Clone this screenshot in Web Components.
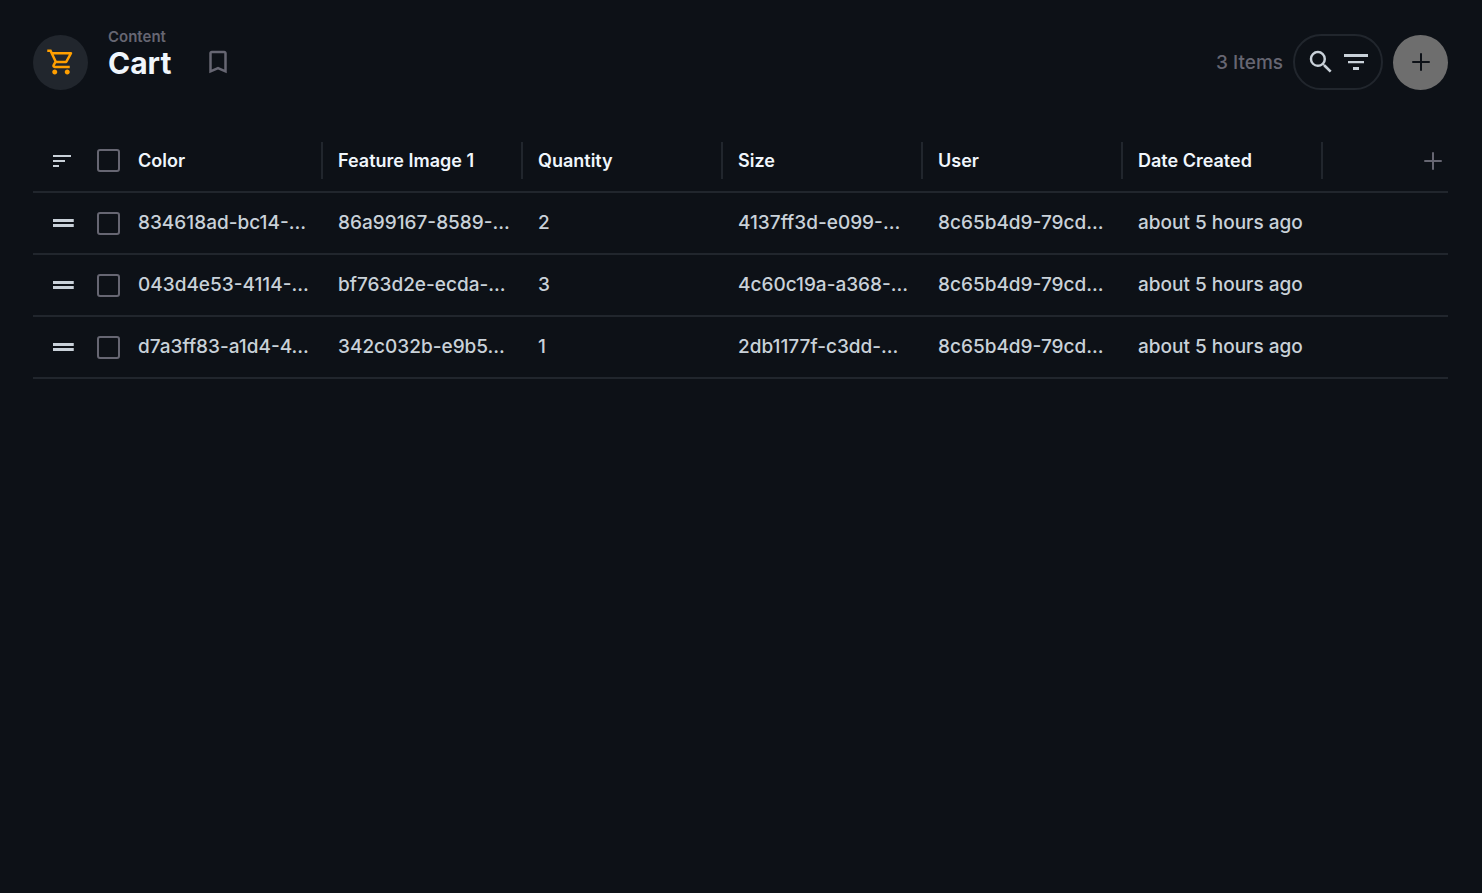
<!DOCTYPE html>
<html lang="en">
<head>
    <meta charset="UTF-8">
    <meta name="viewport" content="width=device-width, initial-scale=1.0">
    <title>Cart</title>
    <style>
        :root {
            --background: #0d1117;
            --border: #21262d;
            --foreground: #c9d1d9;
            --foreground-accent: #f0f6fc;
            --foreground-subdued: #666672;
            --warning: #ff9f00;
        }
        body {
            margin: 0;
            background-color: var(--background);
            color: var(--foreground);
            font-family: Inter, "Liberation Sans", sans-serif;
            font-size: 19px;
            font-weight: 500;
        }
        main {
            padding: 28px 34px 33px 33px;
        }
    </style>
</head>
<body>
    <main>
        <content-header icon="cart">
            <span slot="headline">Content</span>
            <span slot="title">Cart</span>
            <span slot="count">3 Items</span>
        </content-header>
        <items-table></items-table>
    </main>

    <script>
        const icons = {
            cart: "M15.55 13c.75 0 1.41-.41 1.75-1.03l3.58-6.49c.37-.66-.11-1.48-.87-1.48H5.21l-.94-2H1v2h2l3.6 7.59-1.35 2.44C4.52 15.37 5.48 17 7 17h12v-2H7l1.1-2h7.45zM6.16 6h12.15l-2.76 5H8.53L6.16 6zM7 18c-1.1 0-1.99.9-1.99 2S5.9 22 7 22s2-.9 2-2-.9-2-2-2zm10 0c-1.1 0-1.99.9-1.99 2s.89 2 1.99 2 2-.9 2-2-.9-2-2-2z",
            bookmark: "M17 3H7c-1.1 0-2 .9-2 2v16l7-3 7 3V5c0-1.1-.9-2-2-2zm0 15l-5-2.18L7 18V5h10v13z",
            search: "M15.5 14h-.79l-.28-.27A6.47 6.47 0 0 0 16 9.5 6.5 6.5 0 1 0 9.5 16c1.61 0 3.09-.59 4.23-1.57l.27.28v.79l5 4.99L20.49 19l-4.99-5zm-6 0C7.01 14 5 11.99 5 9.5S7.01 5 9.5 5 14 7.01 14 9.5 11.99 14 9.5 14z",
            filter: "M2.4 5.6h19.2V8H2.4zM5.6 11.2h12.8v1.8H5.6zM9.6 16h4.8v2.4H9.6z",
            add: "M19 12.8h-6.2V19h-1.6v-6.2H5v-1.6h6.2V5h1.6v6.2H19v1.6z",
            sort: "M3 18h6v-2H3v2zM3 6v2h18V6H3zm0 7h12v-2H3v2z",
            drag: "M4 8.8h16.6v2.4H4zM4 12.8h16.6v2.4H4z"
        };

        class AppIcon extends HTMLElement {
            constructor() {
                super();
                this.shadowDOM = this.attachShadow({ mode: "open" });
            }

            connectedCallback() {
                this.shadowDOM.innerHTML = `
                    <style>
                        :host {
                            display: block;
                            width: 30px;
                            height: 30px;
                        }
                        svg {
                            display: block;
                            width: 100%;
                            height: 100%;
                            fill: currentColor;
                        }
                    </style>
                    <svg viewBox="0 0 24 24" aria-hidden="true">
                        <path d="${icons[this.getAttribute("name")]}"/>
                    </svg>
                `;
            }
        }

        customElements.define("app-icon", AppIcon);

        class SearchBar extends HTMLElement {
            constructor() {
                super();
                this.shadowDOM = this.attachShadow({ mode: "open" });
            }

            connectedCallback() {
                this.shadowDOM.innerHTML = `
                    <style>
                        :host {
                            display: flex;
                            align-items: center;
                            gap: 5px;
                            box-sizing: border-box;
                            height: 56px;
                            padding: 0 10px 0 11px;
                            border: 2px solid var(--border);
                            border-radius: 28px;
                        }
                        button {
                            padding: 0;
                            border: none;
                            background: none;
                            color: inherit;
                            cursor: pointer;
                        }
                    </style>
                    <button aria-label="Search"><app-icon name="search"></app-icon></button>
                    <button aria-label="Filter"><app-icon name="filter"></app-icon></button>
                `;
            }
        }

        customElements.define("search-bar", SearchBar);

        class ContentHeader extends HTMLElement {
            constructor() {
                super();
                this.shadowDOM = this.attachShadow({ mode: "open" });
            }

            connectedCallback() {
                this.shadowDOM.innerHTML = `
                    <style>
                        :host {
                            display: flex;
                            align-items: center;
                            min-height: 68px;
                            margin-bottom: 34px;
                        }
                        .badge,
                        .add {
                            display: flex;
                            align-items: center;
                            justify-content: center;
                            width: 55px;
                            height: 55px;
                            border-radius: 50%;
                        }
                        .badge {
                            background-color: var(--border);
                            color: var(--warning);
                        }
                        .titles {
                            align-self: flex-start;
                            margin: 0 32px 0 20px;
                        }
                        .headline {
                            font-size: 15px;
                            font-weight: 600;
                            line-height: 17px;
                            color: var(--foreground-subdued);
                        }
                        h1 {
                            margin: 0;
                            font-size: 30px;
                            font-weight: 700;
                            line-height: 36px;
                            color: var(--foreground-accent);
                        }
                        button {
                            padding: 0;
                            border: none;
                            background: none;
                            cursor: pointer;
                        }
                        .bookmark {
                            color: var(--foreground-subdued);
                        }
                        .actions {
                            display: flex;
                            align-items: center;
                            gap: 10px;
                            margin-left: auto;
                        }
                        .count {
                            color: var(--foreground-subdued);
                        }
                        .add {
                            background-color: #6e6e6e;
                            color: var(--background);
                        }
                    </style>
                    <div class="badge"><app-icon name="${this.getAttribute("icon")}"></app-icon></div>
                    <div class="titles">
                        <div class="headline"><slot name="headline"></slot></div>
                        <h1><slot name="title"></slot></h1>
                    </div>
                    <button class="bookmark" aria-label="Bookmark"><app-icon name="bookmark"></app-icon></button>
                    <div class="actions">
                        <div class="count"><slot name="count"></slot></div>
                        <search-bar></search-bar>
                        <button class="add" aria-label="Create item"><app-icon name="add"></app-icon></button>
                    </div>
                `;
            }
        }

        customElements.define("content-header", ContentHeader);

        class CheckBox extends HTMLElement {
            constructor() {
                super();
                this.shadowDOM = this.attachShadow({ mode: "open" });
            }

            connectedCallback() {
                this.shadowDOM.innerHTML = `
                    <style>
                        :host {
                            display: block;
                        }
                        input {
                            appearance: none;
                            display: block;
                            box-sizing: border-box;
                            width: 23px;
                            height: 23px;
                            margin: 0;
                            border: 2px solid var(--foreground-subdued);
                            border-radius: 3px;
                            cursor: pointer;
                        }
                        input:checked {
                            background-color: var(--foreground-subdued);
                        }
                    </style>
                    <input type="checkbox" aria-label="${this.getAttribute("label")}">
                `;
            }
        }

        customElements.define("check-box", CheckBox);

        const columns = ["Color", "Feature Image 1", "Quantity", "Size", "User", "Date Created"];
        const items = [
            ["834618ad-bc14-…", "86a99167-8589-…", "2", "4137ff3d-e099-…", "8c65b4d9-79cd…", "about 5 hours ago"],
            ["043d4e53-4114-…", "bf763d2e-ecda-…", "3", "4c60c19a-a368-…", "8c65b4d9-79cd…", "about 5 hours ago"],
            ["d7a3ff83-a1d4-4…", "342c032b-e9b5…", "1", "2db1177f-c3dd-…", "8c65b4d9-79cd…", "about 5 hours ago"]
        ];

        class ItemsTable extends HTMLElement {
            constructor() {
                super();
                this.shadowDOM = this.attachShadow({ mode: "open" });
            }

            connectedCallback() {
                this.render();
            }

            render() {
                this.shadowDOM.innerHTML = `
                    <style>
                        :host {
                            display: block;
                        }
                        table {
                            width: 100%;
                            table-layout: fixed;
                            border-spacing: 0;
                        }
                        .col-drag {
                            width: 57px;
                        }
                        .col-select {
                            width: 33px;
                        }
                        .col-field {
                            width: 200px;
                        }
                        th,
                        td {
                            box-sizing: border-box;
                            height: 62px;
                            padding: 0;
                            border-bottom: 2px solid var(--border);
                            text-align: left;
                            white-space: nowrap;
                        }
                        th {
                            height: 63px;
                            font-weight: 600;
                            font-size: 18px;
                            color: var(--foreground-accent);
                        }
                        .drag {
                            padding-left: 15px;
                        }
                        .select {
                            padding-left: 7px;
                        }
                        .name {
                            padding-left: 15px;
                            border-right: 2px solid var(--border);
                            line-height: 37px;
                        }
                        .value {
                            padding: 0 13px 0 15px;
                            overflow: hidden;
                            text-overflow: ellipsis;
                            line-height: 30px;
                        }
                        button {
                            display: flex;
                            align-items: center;
                            justify-content: center;
                            width: 30px;
                            height: 30px;
                            padding: 0;
                            border: none;
                            background: none;
                            color: var(--foreground);
                            cursor: pointer;
                        }
                        .sort {
                            width: 28px;
                        }
                        .sort app-icon {
                            width: 24px;
                            height: 24px;
                        }
                        .add-field {
                            margin-left: auto;
                            color: var(--foreground-subdued);
                        }
                    </style>
                    <table>
                        <colgroup>
                            <col class="col-drag">
                            <col class="col-select">
                            ${columns.map(() => `<col class="col-field">`).join("")}
                            <col>
                        </colgroup>
                        <thead>
                            <tr>
                                <th class="drag"><button class="sort" aria-label="Sort manually"><app-icon name="sort"></app-icon></button></th>
                                <th class="select"><check-box label="Select all"></check-box></th>
                                ${columns.map(name => `<th><div class="name">${name}</div></th>`).join("")}
                                <th><button class="add-field" aria-label="Add field"><app-icon name="add"></app-icon></button></th>
                            </tr>
                        </thead>
                        <tbody>
                            ${items.map(item => `
                                <tr>
                                    <td class="drag"><app-icon name="drag"></app-icon></td>
                                    <td class="select"><check-box label="Select item"></check-box></td>
                                    ${item.map(value => `<td><div class="value">${value}</div></td>`).join("")}
                                    <td></td>
                                </tr>
                            `).join("")}
                        </tbody>
                    </table>
                `;
            }
        }

        customElements.define("items-table", ItemsTable);
    </script>
</body>
</html>
